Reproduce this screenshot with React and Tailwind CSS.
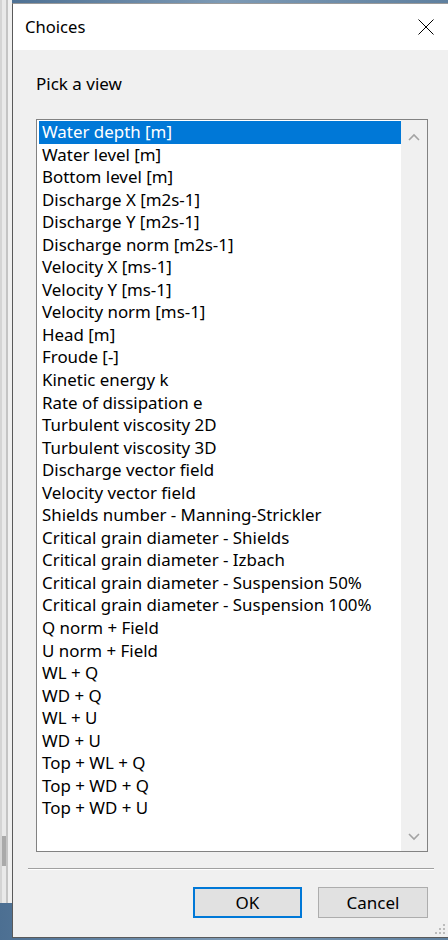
import { useState } from 'react';

const VIEWS = [
  'Water depth [m]',
  'Water level [m]',
  'Bottom level [m]',
  'Discharge X [m2s-1]',
  'Discharge Y [m2s-1]',
  'Discharge norm [m2s-1]',
  'Velocity X [ms-1]',
  'Velocity Y [ms-1]',
  'Velocity norm [ms-1]',
  'Head [m]',
  'Froude [-]',
  'Kinetic energy k',
  'Rate of dissipation e',
  'Turbulent viscosity 2D',
  'Turbulent viscosity 3D',
  'Discharge vector field',
  'Velocity vector field',
  'Shields number - Manning-Strickler',
  'Critical grain diameter - Shields',
  'Critical grain diameter - Izbach',
  'Critical grain diameter - Suspension 50%',
  'Critical grain diameter - Suspension 100%',
  'Q norm + Field',
  'U norm + Field',
  'WL + Q',
  'WD + Q',
  'WL + U',
  'WD + U',
  'Top + WL + Q',
  'Top + WD + Q',
  'Top + WD + U',
];

const FONT = 'font-["Segoe_UI","Noto_Sans","Open_Sans",sans-serif]';

function Chevron({ up }) {
  return (
    <svg width="12" height="8" viewBox="0 0 12 8" className="block">
      <path
        d={up ? 'M1 7 L6 2 L11 7' : 'M1 1 L6 6 L11 1'}
        fill="none"
        stroke="#a3a3a3"
        strokeWidth="1.6"
      />
    </svg>
  );
}

export default function App() {
  const [selected, setSelected] = useState(0);

  return (
    <div className={`w-[448px] h-[940px] overflow-hidden bg-gradient-to-r from-[#4c6f92] via-[#7d9ab5] to-[#5f809f] flex items-start ${FONT}`}>
      {/* window behind the dialog */}
      <div className="w-[12px] h-[903px] bg-[#f0f0f0] flex shrink-0">
        <div className="w-[2px] h-full bg-[#d4d4d4]" />
        <div className="w-[4px] h-full bg-[#e9e9e9] flex flex-col">
          <div className="h-[836px]" />
          <div className="h-[30px] bg-[#a9a9a9]" />
        </div>
        <div className="w-[2px] h-full bg-[#c4c4c4]" />
        <div className="flex-1 h-full bg-[#f0f0f0]" />
      </div>

      {/* dialog */}
      <div className="relative w-[436px] h-[935px] shrink-0 mt-[3px] border-l border-t border-b border-l-[#5a5a5a] border-t-[#9a9a9a] border-b-[#5a5a5a] bg-[#f0f0f0] flex flex-col">
        <div className="h-[46px] bg-white flex items-center justify-between pl-[12px] pr-[14px]">
          <span className="text-[16.6px] text-black leading-none">Choices</span>
          <svg width="16" height="16" viewBox="0 0 16 16" className="block">
            <path d="M0.5 0.5 L15.5 15.5 M15.5 0.5 L0.5 15.5" stroke="#000" strokeWidth="1" />
          </svg>
        </div>

        <div className="pt-[23px] pl-[23px] text-[17px] leading-[22px] text-black">Pick a view</div>

        <div className="mt-[24px] ml-[23px] w-[392px] h-[733px] border border-[#828282] bg-white flex">
          <div className="flex-1 pt-[1px] pl-[2px] overflow-hidden">
            {VIEWS.map((v, i) => (
              <div
                key={v}
                onClick={() => setSelected(i)}
                className={`h-[22.55px] pl-[3px] text-[16.9px] leading-[22.55px] whitespace-nowrap ${
                  i === selected ? 'bg-[#0078d7] text-white' : 'text-black'
                }`}
              >
                {v}
              </div>
            ))}
          </div>
          <div className="w-[26px] bg-[#f0f0f0] flex flex-col items-center justify-between pt-[13px] pb-[10px]">
            <Chevron up />
            <Chevron />
          </div>
        </div>

        <div className="mt-[16px] ml-[15px] w-[406px] h-[2px] flex flex-col">
          <div className="h-px bg-[#a0a0a0]" />
          <div className="h-px bg-white" />
        </div>

        <div className="mt-[17px] pr-[20px] flex justify-end gap-[16px]">
          <button className="w-[109px] h-[31px] border-2 border-[#0078d7] bg-[#e1e1e1] text-[17px] text-black leading-none">
            OK
          </button>
          <button className="w-[110px] h-[31px] border border-[#adadad] bg-[#e1e1e1] text-[17px] text-black leading-none">
            Cancel
          </button>
        </div>

        {/* size grip */}
        <svg width="12" height="12" viewBox="0 0 12 12" className="absolute right-[2px] bottom-[2px]">
          {[[9, 1], [5, 5], [9, 5], [1, 9], [5, 9], [9, 9]].map(([x, y]) => (
            <rect key={`${x}-${y}`} x={x} y={y} width="2" height="2" fill="#bcbcbc" />
          ))}
        </svg>
      </div>
    </div>
  );
}
